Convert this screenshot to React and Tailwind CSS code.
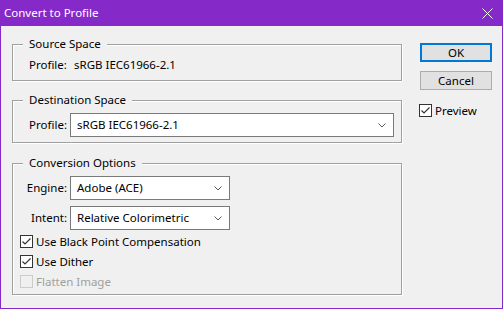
import React from "react";

const Chevron = () => (
  <svg width="8" height="5" viewBox="0 0 8 5" className="shrink-0">
    <path d="M0.5 0.5 L4 4 L7.5 0.5" fill="none" stroke="#5a5a5a" strokeWidth="1" />
  </svg>
);

const Select = ({ value, width }) => (
  <div
    className={`h-[24px] ${width} bg-white border border-[#7a7a7a] flex items-center justify-between pl-[6px] pr-[7px]`}
  >
    <span className="text-black">{value}</span>
    <Chevron />
  </div>
);

const Checkbox = ({ label, checked, disabled }) => (
  <div className="h-[13px] flex items-center">
    <div
      className={`w-[13px] h-[13px] border flex items-center justify-center shrink-0 ${
        disabled ? "border-[#cccccc] bg-[#f0f0f0]" : "border-[#333333] bg-white"
      }`}
    >
      {checked && (
        <svg width="11" height="11" viewBox="0 0 11 11">
          <path d="M1.5 5.5 L4 8 L9.5 2.5" fill="none" stroke="#333333" strokeWidth="1.2" />
        </svg>
      )}
    </div>
    <span className={`ml-[3px] whitespace-nowrap ${disabled ? "text-[#a0a0a0]" : "text-black"}`}>{label}</span>
  </div>
);

const GroupBox = ({ title, className, children }) => (
  <div
    className={`w-[390px] border border-[#a0a0a0] shadow-[inset_1px_1px_0_#ffffff,1px_1px_0_#ffffff] ${className}`}
  >
    <div className="-mt-[9px] h-[16px] leading-[16px] flex">
      <span className="ml-[10px] px-[6px] bg-[#f0f0f0]">{title}</span>
    </div>
    {children}
  </div>
);

export default function App() {
  return (
    <div className="w-[503px] h-[309px] flex flex-col bg-[#8629c9] font-['Segoe_UI','Noto_Sans',sans-serif] text-[11.5px] leading-[16px] text-black">
      {/* Title bar */}
      <div className="h-[26px] flex items-center justify-between pl-[4px] pr-[10px] text-white shrink-0">
        <span className="text-[11.5px]">Convert to Profile</span>
        <svg width="11" height="11" viewBox="0 0 11 11">
          <path d="M0.5 0.5 L10.5 10.5 M10.5 0.5 L0.5 10.5" stroke="#ffffff" strokeWidth="1" />
        </svg>
      </div>

      {/* Body */}
      <div className="flex-1 mx-[1px] mb-[1px] bg-[#f0f0f0] flex">
        <div className="pl-[11px] pt-[18px]">
          <GroupBox title="Source Space" className="h-[37px]">
            <div className="flex mt-[5px] pl-[16px]">
              <span className="w-[45px]">Profile:</span>
              <span>sRGB IEC61966-2.1</span>
            </div>
          </GroupBox>

          <GroupBox title="Destination Space" className="h-[43px] mt-[19px]">
            <div className="flex items-center mt-[5px]">
              <span className="w-[54px] text-right">Profile:</span>
              <div className="ml-[3px]">
                <Select value="sRGB IEC61966-2.1" width="w-[324px]" />
              </div>
            </div>
          </GroupBox>

          <GroupBox title="Conversion Options" className="h-[132px] mt-[20px]">
            <div className="flex items-center mt-[5px]">
              <span className="w-[54px] text-right">Engine:</span>
              <div className="ml-[3px]">
                <Select value="Adobe (ACE)" width="w-[160px]" />
              </div>
            </div>
            <div className="flex items-center mt-[6px]">
              <span className="w-[54px] text-right">Intent:</span>
              <div className="ml-[3px]">
                <Select value="Relative Colorimetric" width="w-[160px]" />
              </div>
            </div>
            <div className="flex flex-col gap-[7px] mt-[5px] pl-[7px]">
              <Checkbox label="Use Black Point Compensation" checked />
              <Checkbox label="Use Dither" checked />
              <Checkbox label="Flatten Image" disabled />
            </div>
          </GroupBox>
        </div>

        {/* Buttons */}
        <div className="ml-[18px] pt-[17px] flex flex-col">
          <button className="w-[72px] h-[19px] border-2 border-[#0078d7] bg-[#e1e1e1] flex items-center justify-center leading-none">
            OK
          </button>
          <button className="w-[72px] h-[19px] mt-[9px] border border-[#adadad] bg-[#e1e1e1] flex items-center justify-center leading-none">
            Cancel
          </button>
          <div className="mt-[14px] -ml-[1px]">
            <Checkbox label="Preview" checked />
          </div>
        </div>
      </div>
    </div>
  );
}
